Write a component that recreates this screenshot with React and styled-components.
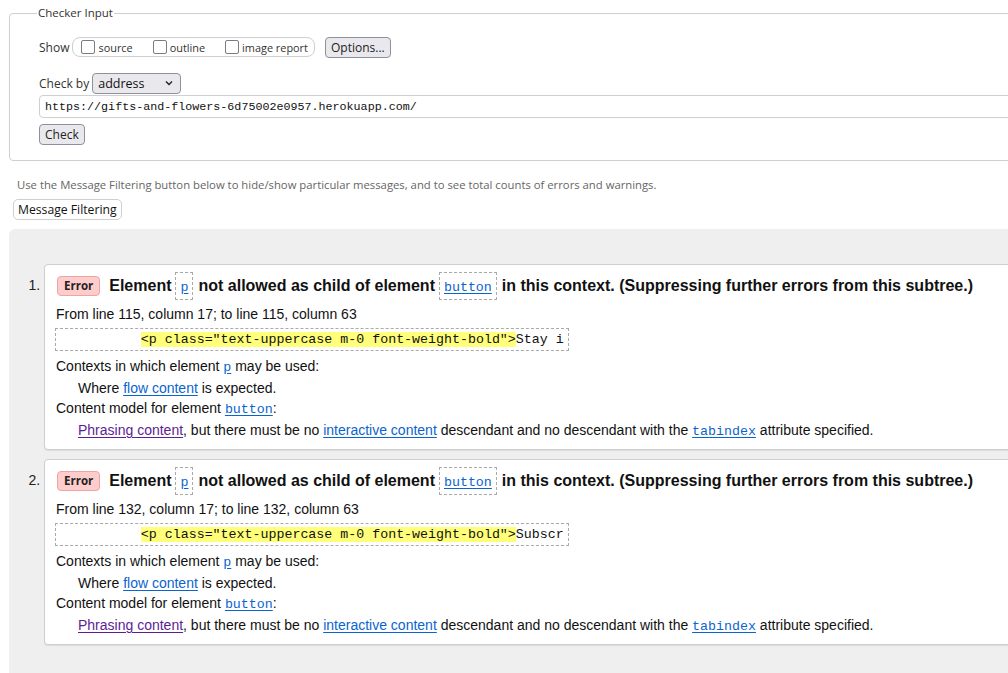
import React from 'react';
import styled, { createGlobalStyle } from 'styled-components';

const GlobalStyle = createGlobalStyle`
  html, body {
    margin: 0;
    padding: 0;
    overflow: hidden;
    background: #fff;
  }
  body {
    font-family: "Open Sans", "Noto Sans", sans-serif;
    color: #222;
  }
`;

const Page = styled.div`
  width: 1120px;
  padding: 3px 0 0 9px;
`;

const Fieldset = styled.fieldset`
  margin: 0;
  border: 1px solid #cfcfcf;
  border-radius: 4px;
  padding: 2px 0 15px 29px;
`;

const Legend = styled.legend`
  font-size: 11.5px;
  color: #333;
  padding: 0 1px;
  margin-left: -2px;
  line-height: 20px;
`;

const Row = styled.div`
  display: flex;
  align-items: center;
  gap: 3px;
  height: 22px;
  margin-top: ${(p) => p.$top || 0}px;
  font-size: 12px;
  color: #333;
`;

const ShowGroup = styled.div`
  display: flex;
  align-items: center;
  height: 18px;
  border: 1px solid #cfcfcf;
  border-radius: 8px;
  padding: 0 6px 0 8px;
  margin-right: 7px;
`;

const CheckLabel = styled.label`
  display: flex;
  align-items: center;
  gap: 3px;
  font-size: 10.9px;
  color: #333;
  margin-right: ${(p) => p.$gap || 0}px;
`;

const Box = styled.span`
  width: 12px;
  height: 12px;
  border: 1px solid #7b7b84;
  border-radius: 2px;
  background: #fff;
`;

const GreyButton = styled.button`
  font-family: "Open Sans", "Noto Sans", sans-serif;
  font-size: 12px;
  color: #222;
  background: #e9e9ed;
  border: 1px solid #8f8f9d;
  border-radius: 4px;
  height: 21px;
  padding: 0 5px;
  line-height: 19px;
`;

const SelectBox = styled.div`
  display: flex;
  align-items: center;
  justify-content: space-between;
  width: 76px;
  height: 19px;
  padding: 0 6px 0 5px;
  background: #e9e9ed;
  border: 1px solid #8f8f9d;
  border-radius: 4px;
  font-size: 12.5px;
  color: #111;
`;

const UrlInput = styled.div`
  margin-top: 1px;
  height: 21px;
  border: 1px solid #cfcfcf;
  border-radius: 4px;
  padding-left: 5px;
  display: flex;
  align-items: center;
  font-family: "Liberation Mono", monospace;
  font-size: 11.7px;
  color: #111;
`;

const CheckRow = styled.div`
  display: flex;
  margin-top: 6px;
`;

const Note = styled.p`
  margin: 16px 0 0 8px;
  font-size: 11.3px;
  color: #666;
  line-height: 16px;
`;

const FilterButton = styled.button`
  margin: 6px 0 0 4px;
  font-family: "Open Sans", "Noto Sans", sans-serif;
  font-size: 12.2px;
  color: #111;
  background: #fff;
  border: 1px solid #cfcfcf;
  border-radius: 5px;
  height: 21px;
  padding: 0 4px;
`;

const Results = styled.div`
  margin-top: 9px;
  background: #efefef;
  border-radius: 6px 0 0 0;
  padding: 35px 0 40px 0;
`;

const MessageList = styled.ol`
  margin: 0;
  padding: 0 0 0 35px;
  font-family: "Liberation Sans", Arial, sans-serif;
  font-size: 14px;
  color: #111;
`;

const MessageItem = styled.li`
  margin-bottom: 9px;
  &::marker {
    color: #222;
    font-size: 14px;
  }
`;

const MessageBox = styled.div`
  background: #fff;
  border: 1px solid #cfcfcf;
  border-radius: 4px;
  box-shadow: 0 1px 1px rgba(0, 0, 0, 0.08);
  padding: 7px 0 9px 11px;
`;

const Heading = styled.div`
  display: flex;
  align-items: center;
  white-space: nowrap;
  font-weight: bold;
  font-size: 16px;
  height: 28px;
  line-height: 28px;
`;

const Badge = styled.span`
  display: inline-flex;
  align-items: center;
  height: 18px;
  padding: 0 6px;
  margin: 0 9px 0 1px;
  background: #fcc;
  border: 1px solid #eaa6a6;
  border-radius: 4px;
  font-family: "Open Sans", "Noto Sans", sans-serif;
  font-size: 11.5px;
  font-weight: bold;
  color: #222;
`;

const CodeTag = styled.span`
  display: inline-block;
  margin: 0 5px 0 4px;
  padding: 0 4px;
  height: 26px;
  line-height: 26px;
  border: 1px dashed #aaa;
  font-weight: normal;
`;

const Link = styled.a`
  color: ${(p) => (p.$visited ? '#5b1e96' : '#0a64cf')};
  text-decoration: underline;
  text-underline-offset: 2px;
  font-family: ${(p) => (p.$mono ? '"Liberation Mono", monospace' : 'inherit')};
  font-size: ${(p) => (p.$mono ? '13.3px' : 'inherit')};
  cursor: pointer;
`;

const Location = styled.p`
  margin: 4px 0 0 0;
  line-height: 20px;
`;

const Extract = styled.div`
  display: inline-block;
  margin: 4px 0 0 -1px;
  padding: 2px 4px 2px 5px;
  border: 1px dashed #aaa;
  font-family: "Liberation Mono", monospace;
  font-size: 13.3px;
  line-height: 17px;
  white-space: pre;
  color: #111;
`;

const Mark = styled.mark`
  background: #ffff7a;
  color: #111;
`;

const Term = styled.div`
  height: 20px;
  line-height: 20px;
  margin-top: ${(p) => p.$top || 0}px;
`;

const Desc = styled.div`
  height: 20px;
  line-height: 20px;
  margin: 2px 0 0 22px;
`;

const messages = [
  { line: 115, text: 'Stay i' },
  { line: 132, text: 'Subscr' },
];

const Message = ({ line, text }) => (
  <MessageItem>
    <MessageBox>
      <Heading>
        <Badge>Error</Badge>
        Element
        <CodeTag>
          <Link $mono>p</Link>
        </CodeTag>
        not allowed as child of element
        <CodeTag>
          <Link $mono>button</Link>
        </CodeTag>
        in this context. (Suppressing further errors from this subtree.)
      </Heading>
      <Location>
        From line {line}, column 17; to line {line}, column 63
      </Location>
      <Extract>
        {'          '}
        <Mark>{'<p class="text-uppercase m-0 font-weight-bold">'}</Mark>
        {text}
      </Extract>
      <Term $top={5}>
        Contexts in which element <Link $mono>p</Link> may be used:
      </Term>
      <Desc>
        Where <Link>flow content</Link> is expected.
      </Desc>
      <Term>
        Content model for element <Link $mono>button</Link>:
      </Term>
      <Desc>
        <Link $visited>Phrasing content</Link>, but there must be no{' '}
        <Link>interactive content</Link> descendant and no descendant with the{' '}
        <Link $mono>tabindex</Link> attribute specified.
      </Desc>
    </MessageBox>
  </MessageItem>
);

const Chevron = () => (
  <svg width="10" height="10" viewBox="0 0 10 10">
    <path d="M2 3.5 L5 6.5 L8 3.5" fill="none" stroke="#222" strokeWidth="1.4" />
  </svg>
);

export default function App() {
  return (
    <>
      <GlobalStyle />
      <Page>
        <Fieldset>
          <Legend>Checker Input</Legend>
          <Row $top={11}>
            Show
            <ShowGroup>
              <CheckLabel $gap={20}>
                <Box />
                source
              </CheckLabel>
              <CheckLabel $gap={20}>
                <Box />
                outline
              </CheckLabel>
              <CheckLabel>
                <Box />
                image report
              </CheckLabel>
            </ShowGroup>
            <GreyButton>Options...</GreyButton>
          </Row>
          <Row $top={14}>
            Check by
            <SelectBox>
              address
              <Chevron />
            </SelectBox>
          </Row>
          <UrlInput>https://gifts-and-flowers-6d75002e0957.herokuapp.com/</UrlInput>
          <CheckRow>
            <GreyButton>Check</GreyButton>
          </CheckRow>
        </Fieldset>
        <Note>
          Use the Message Filtering button below to hide/show particular messages, and to see total
          counts of errors and warnings.
        </Note>
        <FilterButton>Message Filtering</FilterButton>
        <Results>
          <MessageList>
            {messages.map((m) => (
              <Message key={m.line} {...m} />
            ))}
          </MessageList>
        </Results>
      </Page>
    </>
  );
}
